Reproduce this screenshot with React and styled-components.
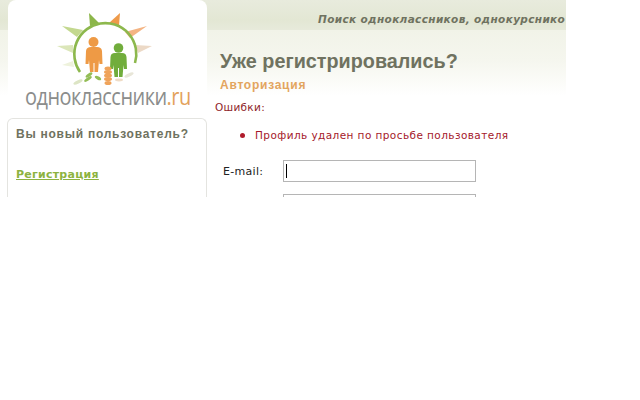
import React from 'react'
import styled, { createGlobalStyle } from 'styled-components'

const Global = createGlobalStyle`
  html, body { margin: 0; padding: 0; background: #fff; }
`;

const Page = styled.div`
  width: 566px;
  height: 197px;
  overflow: hidden;
  display: flex;
  padding-left: 7px;
  box-sizing: border-box;
  font-family: "DejaVu Sans", Verdana, sans-serif;
  background:
    linear-gradient(#e8ebdd 0, #e3e7d4 20px, #e7eadb 30px, transparent 30px) no-repeat,
    linear-gradient(#f1f3e8 30px, #f5f6ee 60px, #ffffff 96px) no-repeat;
`;

const Sidebar = styled.div`
  width: 200px;
  flex: none;
  display: flex;
  flex-direction: column;
`;

const LogoCard = styled.div`
  height: 118px;
  margin-left: 1px;
  background: #fff;
  border-radius: 8px 8px 0 0;
  svg { display: block; }
`;

const LogoText = styled.div`
  font-family: "Open Sans", sans-serif;
  font-size: 24px;
  letter-spacing: -0.6px;
  line-height: 26px;
  color: #8b8d8c;
  white-space: nowrap;
  margin: -5px 0 0 17px;
  transform: scaleX(0.83);
  transform-origin: left center;
  span { color: #e3a25c; }
`;

const NewUserBox = styled.div`
  flex: 1;
  border: 1px solid #e4e4e0;
  border-bottom: none;
  border-radius: 6px 6px 0 0;
  padding: 8px 8px 0;
`;

const BoxTitle = styled.div`
  font-family: "Liberation Sans", Arial, sans-serif;
  font-weight: bold;
  font-size: 12px;
  letter-spacing: 0.75px;
  color: #6f7260;
`;

const RegLink = styled.a`
  display: block;
  margin-top: 27px;
  font-size: 11px;
  font-weight: bold;
  letter-spacing: 0.25px;
  color: #8db33f;
  text-decoration: underline;
`;

const Main = styled.div`
  flex: 1;
  min-width: 0;
  padding-left: 8px;
`;

const Slogan = styled.div`
  height: 30px;
  white-space: nowrap;
  padding: 13px 0 0 103px;
  box-sizing: border-box;
  font-style: italic;
  font-weight: bold;
  font-size: 10.5px;
  letter-spacing: 0.36px;
  color: #6f7260;
`;

const Heading = styled.h1`
  margin: 18px 0 0 5px;
  font-family: "Liberation Sans", Arial, sans-serif;
  font-weight: bold;
  font-size: 19.8px;
  line-height: 26px;
  color: #6f7260;
`;

const SubHeading = styled.div`
  margin: 4px 0 0 5px;
  font-family: "Liberation Sans", Arial, sans-serif;
  font-weight: bold;
  font-size: 12px;
  line-height: 15px;
  letter-spacing: 0.75px;
  color: #e3a55f;
`;

const ErrorTitle = styled.div`
  margin-top: 7px;
  font-size: 10.5px;
  line-height: 14px;
  letter-spacing: 0.3px;
  color: #8f1f2a;
`;

const ErrorList = styled.ul`
  list-style: none;
  margin: 14px 0 0;
  padding: 0 0 0 25px;
`;

const ErrorItem = styled.li`
  position: relative;
  padding-left: 15px;
  font-size: 10.5px;
  line-height: 14px;
  letter-spacing: 0.42px;
  white-space: nowrap;
  color: #a5182a;
  &::before {
    content: "";
    position: absolute;
    left: 0;
    top: 5px;
    width: 5px;
    height: 5px;
    border-radius: 50%;
    background: #b01c2c;
  }
`;

const FieldRow = styled.div`
  display: flex;
  align-items: center;
  margin-top: ${p => p.$gap}px;
  padding-left: 8px;
`;

const Label = styled.label`
  width: 60px;
  font-size: 11px;
  letter-spacing: 0.3px;
  color: #222;
`;

const FakeInput = styled.div`
  width: 193px;
  height: 22px;
  box-sizing: border-box;
  border: 1px solid #b5b5b5;
  background: #fff;
  padding: 3px 2px;
  flex: none;
`;

const Caret = styled.div`
  width: 1px;
  height: 14px;
  background: #000;
`;

const Logo = () => (
  <svg width="199" height="88" viewBox="0 0 199 88">
    <polygon points="81,13 82,26 92,24" fill="#8cb64a" />
    <polygon points="112,13 101,23 111,26" fill="#ee9a4a" />
    <polygon points="139,26 117,32 122,38" fill="#f4b483" />
    <polygon points="144,46 127,45 130,53" fill="#ecd9c6" />
    <polygon points="54,26 75,30 69,37" fill="#c3d88f" />
    <polygon points="49,46 65,45 65,53" fill="#dbe6b9" />
    <polygon points="54,65 65,61 66,67" fill="#eef2dc" />
    <path d="M72 72 A31 31 0 1 1 127 63" fill="none" stroke="#8db84d" strokeWidth="2.6" />
    <circle cx="85.500" cy="42" r="5" fill="#ee9a45" />
    <path d="M82 47h7c3 0 4.500 1 5 4l.5 13h-3l-.5-4-1 12h-3.500v-9h-1v9h-3.500l-1-12-.5 4h-3l.5-13c.5-3 2-4 5-4z" fill="#ee9a45" />
    <circle cx="110.500" cy="48" r="4.800" fill="#71ad3c" />
    <path d="M107 53h7c3 0 4 1 4.500 4l.5 12h-3l-.5-4-1 12h-3.500v-9h-1v9h-3.500l-1-12-.5 4h-3l.5-12c.5-3 1.500-4 4.500-4z" fill="#71ad3c" />
    <g fill="#efa35a">
      <ellipse cx="100" cy="68.500" rx="3.500" ry="2" />
      <ellipse cx="100" cy="72" rx="4" ry="2" />
      <ellipse cx="100" cy="75.500" rx="4" ry="2" />
      <ellipse cx="100" cy="79" rx="4" ry="2" />
      <ellipse cx="100" cy="83" rx="3.500" ry="2" />
    </g>
    <g fill="#93bd55">
      <ellipse cx="81" cy="75" rx="4" ry="1.500" transform="rotate(-35 81 75)" />
      <ellipse cx="80" cy="79" rx="4.500" ry="1.500" transform="rotate(-35 80 79)" />
      <ellipse cx="90" cy="78" rx="3.500" ry="1.600" transform="rotate(30 90 78)" />
    </g>
    <ellipse cx="70" cy="82" rx="5" ry="1.600" fill="#dde5c5" transform="rotate(-25 70 82)" />
    <ellipse cx="121" cy="75" rx="5" ry="1.600" fill="#e8e6d8" transform="rotate(-25 121 75)" />
    <ellipse cx="111" cy="80" rx="4" ry="1.400" fill="#efdcc6" />
  </svg>
);

const App = () => (
  <>
    <Global />
    <Page>
      <Sidebar>
        <LogoCard>
          <Logo />
          <LogoText>одноклассники<span>.ru</span></LogoText>
        </LogoCard>
        <NewUserBox>
          <BoxTitle>Вы новый пользователь?</BoxTitle>
          <RegLink>Регистрация</RegLink>
        </NewUserBox>
      </Sidebar>
      <Main>
        <Slogan>Поиск одноклассников, однокурснико</Slogan>
        <Heading>Уже регистрировались?</Heading>
        <SubHeading>Авторизация</SubHeading>
        <ErrorTitle>Ошибки:</ErrorTitle>
        <ErrorList>
          <ErrorItem>Профиль удален по просьбе пользователя</ErrorItem>
        </ErrorList>
        <FieldRow $gap={18}>
          <Label>E-mail:</Label>
          <FakeInput><Caret /></FakeInput>
        </FieldRow>
        <FieldRow $gap={12}>
          <Label />
          <FakeInput />
        </FieldRow>
      </Main>
    </Page>
  </>
);

export default App;
